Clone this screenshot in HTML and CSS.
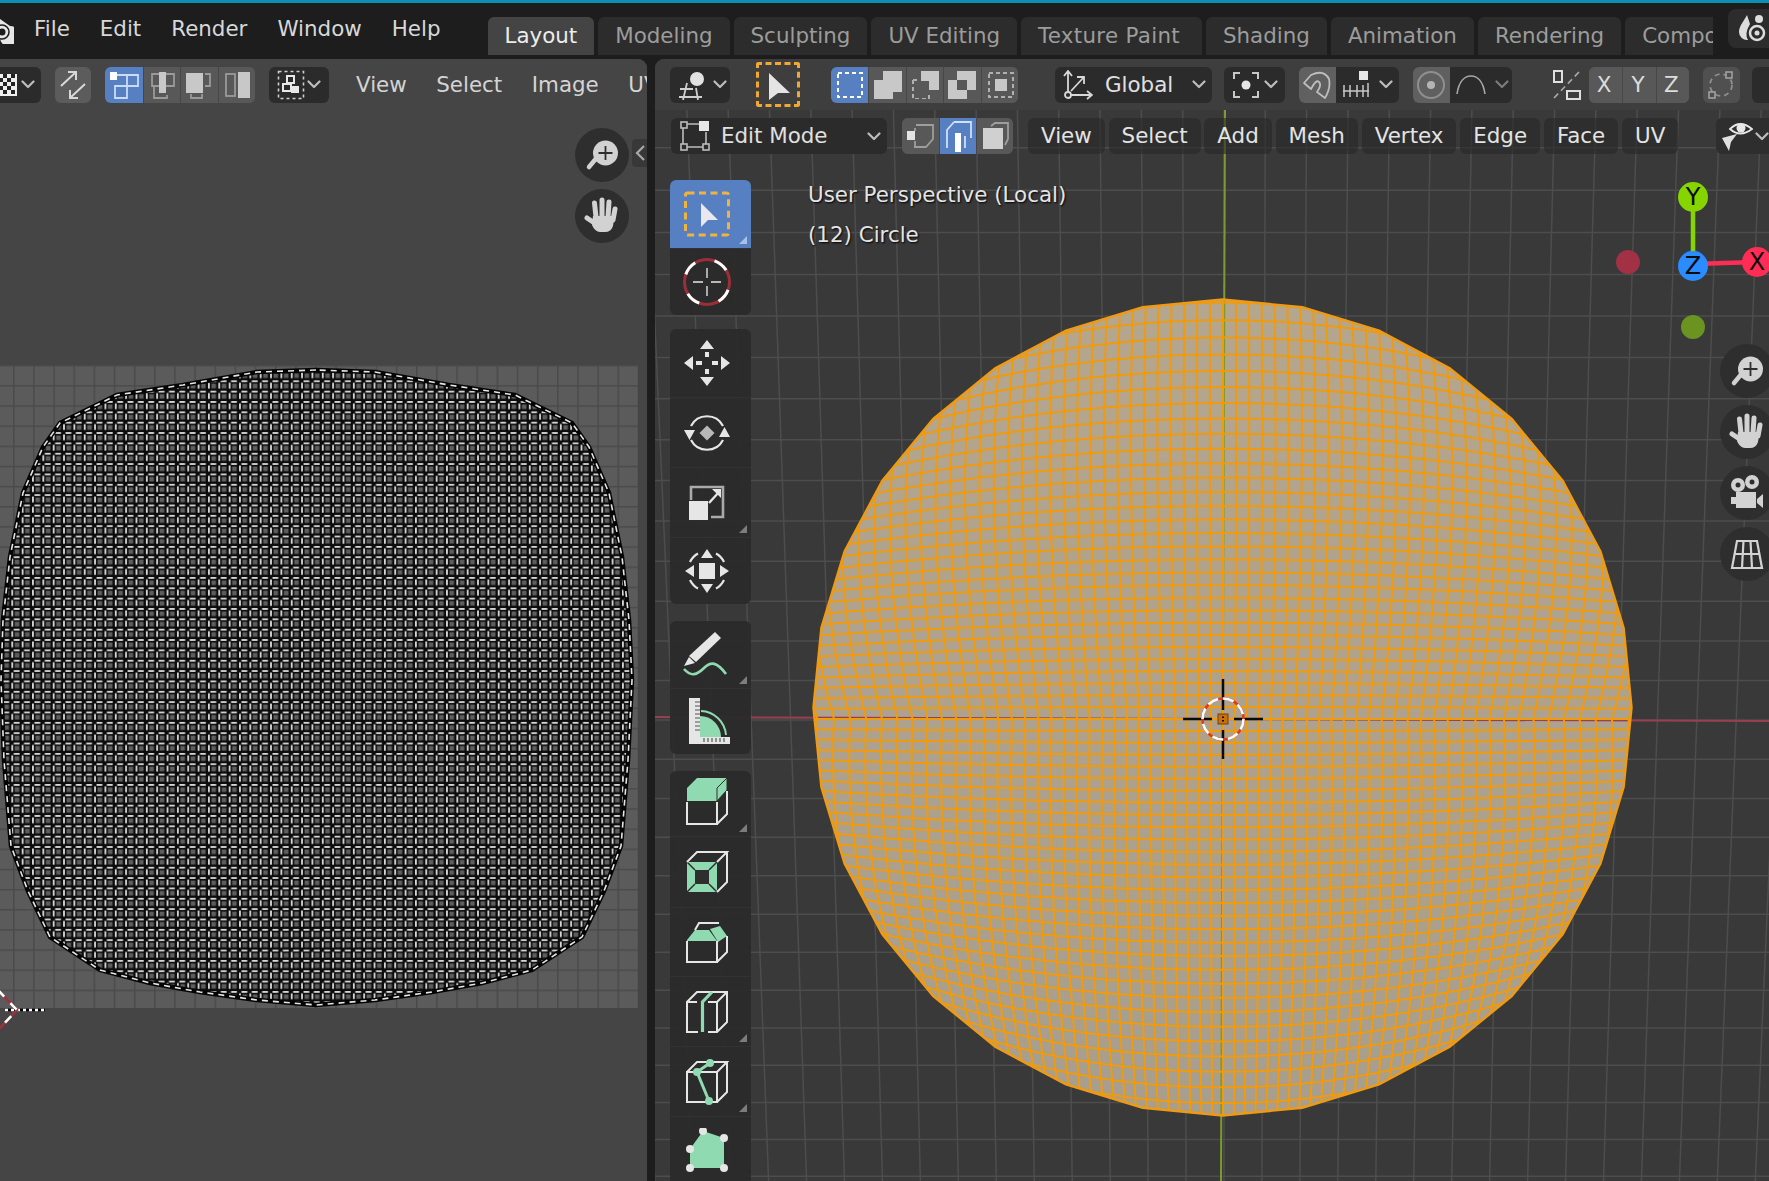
FILE: index.html
```html
<!DOCTYPE html>
<html lang="en">
<head>
<meta charset="utf-8">
<title>Blender – UV Editing</title>
<link rel="stylesheet" href="styles.css">
</head>
<body>
<svg class="sprites" aria-hidden="true">
  <symbol id="chev" viewBox="0 0 14 9"><path d="M1.5 1.5 7 7l5.500-5.500" fill="none" stroke="currentColor" stroke-width="2.200" stroke-linecap="round" stroke-linejoin="round"/></symbol>
  <symbol id="zoom" viewBox="-27 -27 54 54"><path d="M-3-0-13 12" stroke="#d2d2d2" stroke-width="4.500" stroke-linecap="round" fill="none"/><circle cx="3.500" cy="-2" r="12.500" fill="#d2d2d2"/><path d="M3.500-9v14M-3.500-2h14" stroke="#2e2e2e" stroke-width="1.800" fill="none"/></symbol>
  <symbol id="hand" viewBox="-27 -27 54 54"><path d="M-6 1-7.500-13M0 0V-16M6 1 7-14M11 4 13-7M-9 6-15 2" stroke="#d2d2d2" stroke-width="5" stroke-linecap="round" fill="none"/><path d="M-9 0H12.500L11 10Q9 16 3 16H-2Q-7 16-10 9Z" fill="#d2d2d2"/></symbol>
  <symbol id="camera" viewBox="-27 -29 54 54"><circle cx="-9" cy="-10" r="7" fill="#d2d2d2"/><circle cx="5" cy="-13" r="7" fill="#d2d2d2"/><circle cx="-9" cy="-10" r="2.500" fill="#2e2e2e"/><circle cx="5" cy="-13" r="2.500" fill="#2e2e2e"/><path d="M-11-3H9V13H-11ZM-16 2h5v7h-5ZM10 4 16-1V13L10 8Z" fill="#d2d2d2"/></symbol>
  <symbol id="gridicon" viewBox="-27 -27 54 54"><path d="M-10-13H10L15 14H-15ZM-12.500 0H12.500M-3.500-13-5 14M3.500-13 5 14" fill="none" stroke="#d2d2d2" stroke-width="2.200"/></symbol>
</svg>

<header class="topbar">
  <svg class="logo" width="14" height="28" viewBox="0 0 14 28"><path d="M0 3 10 10A10.500 10.500 0 1 1 0 23Z" fill="#e6e6e6"/><circle cx="2" cy="16" r="3.500" fill="#1d1d1d"/><circle cx="2" cy="16" r="7" fill="none" stroke="#1d1d1d" stroke-width="1.500"/></svg>
  <nav class="menu"><span>File</span><span>Edit</span><span>Render</span><span>Window</span><span>Help</span></nav>
  <nav class="tabs">
    <span class="tab tab-active">Layout</span><span class="tab">Modeling</span><span class="tab">Sculpting</span><span class="tab">UV Editing</span><span class="tab tab-wide">Texture Paint</span><span class="tab">Shading</span><span class="tab">Animation</span><span class="tab">Rendering</span><span class="tab">Compositing</span>
  </nav>
  <div class="scene-btn">
    <svg width="40" height="32" viewBox="0 0 40 32"><path d="M11 3C8 9 3 14 3 20a8 8 0 0 0 9 8Q8 22 14 12Z" fill="#dcdcdc"/><circle cx="23" cy="7" r="4" fill="#dcdcdc"/><circle cx="21" cy="21" r="7" fill="none" stroke="#dcdcdc" stroke-width="2.500"/><circle cx="21" cy="21" r="2.500" fill="#dcdcdc"/></svg>
  </div>
</header>

<main class="workspace">
  <section class="uv-editor">
    <svg id="uv" class="canvas" viewBox="0 59 647 1122" width="647" height="1122">
      <defs>
        <pattern id="uvgrid" x="13" y="365" width="20.150" height="20.150" patternUnits="userSpaceOnUse"><path d="M0 0V20.150M0 0H20.150" stroke="#4a4a4a" stroke-width="3" fill="none"/></pattern>
        <pattern id="uvcell" x="1" y="370" width="10.350" height="10.350" patternUnits="userSpaceOnUse">
          <rect width="10.350" height="10.350" fill="#0c0c0c"/>
          <rect x="3.400" y="3.400" width="4.600" height="4.600" fill="#5e5e5e"/>
          <rect x="2.400" y="0" width="5.800" height="1.800" fill="#d8d8d8"/>
          <rect x="0" y="2.400" width="1.800" height="5.800" fill="#d8d8d8"/>
        </pattern>
      </defs>
      <rect x="0" y="365" width="638" height="643" fill="#5b5b5b"/>
      <rect x="0" y="365" width="638" height="643" fill="url(#uvgrid)"/>
      <polygon class="uv-mesh" points="316,370 257,372 183,385 117,395 60,423 43,447 23,493 10,557 3,620 1,680 4,760 11,846 28,891 50,937 100,970 150,983 200,992 257,1000 316,1005 375,1000 432,992 482,983 532,970 582,937 604,891 621,846 628,760 632,680 629,620 622,557 609,493 589,447 572,423 515,395 449,385 375,372"/>
      <polygon class="uv-edge-b" points="316,370 257,372 183,385 117,395 60,423 43,447 23,493 10,557 3,620 1,680 4,760 11,846 28,891 50,937 100,970 150,983 200,992 257,1000 316,1005 375,1000 432,992 482,983 532,970 582,937 604,891 621,846 628,760 632,680 629,620 622,557 609,493 589,447 572,423 515,395 449,385 375,372"/>
      <polygon class="uv-edge-w" points="316,370 257,372 183,385 117,395 60,423 43,447 23,493 10,557 3,620 1,680 4,760 11,846 28,891 50,937 100,970 150,983 200,992 257,1000 316,1005 375,1000 432,992 482,983 532,970 582,937 604,891 621,846 628,760 632,680 629,620 622,557 609,493 589,447 572,423 515,395 449,385 375,372"/>
      <path d="M5 1010H45" stroke="#000" stroke-width="2.500"/><path d="M5 1010H45" stroke="#fff" stroke-width="2.500" stroke-dasharray="3 3"/>
      <path d="M-2 990 17 1010-2 1030" fill="none" stroke="#a2303c" stroke-width="2.500"/><path d="M-2 990 17 1010-2 1030" fill="none" stroke="#fff" stroke-width="2.500" stroke-dasharray="9 9"/>
    </svg>
    <div class="hdr hdr-uv">
      <div class="btn btn-mode">
        <svg width="22" height="22" viewBox="0 0 22 22"><rect width="22" height="22" fill="#eee"/><path d="M0 0h4v4H0zM8 0h4v4H8zM16 0h4v4h-4zM4 4h4v4H4zM12 4h4v4h-4zM0 8h4v4H0zM8 8h4v4H8zM16 8h4v4h-4zM4 12h4v4H4zM12 12h4v4h-4zM0 16h4v4H0zM8 16h4v4H8zM16 16h4v4h-4z" fill="#222"/></svg>
        <svg class="chev"><use href="#chev"/></svg>
      </div>
      <div class="btn btn-sync">
        <svg width="30" height="30" viewBox="0 0 30 30"><path d="M3 16 18 2M10 2h8v8M27 14 12 28M20 28h-8v-8" fill="none" stroke="#d8d8d8" stroke-width="2"/></svg>
      </div>
      <div class="seg seg-uv">
        <span class="cell cell-blue"><svg width="30" height="28" viewBox="0 0 30 28"><path d="M7 4H29V15H18V27H6V15H18M18 4V15" fill="none" stroke="#c9dbf5" stroke-width="1.800"/><rect x="1" y="1" width="7" height="8" fill="#fff"/></svg></span>
        <span class="cell"><svg width="30" height="28" viewBox="0 0 30 28"><path d="M12 3H5V15H12M19 3H27V15H19M7 16V27H20V24" fill="none" stroke="#9a9a9a" stroke-width="1.800"/><rect x="12" y="1" width="7" height="21" fill="#c8c8c8"/></svg></span>
        <span class="cell"><svg width="30" height="28" viewBox="0 0 30 28"><rect x="2" y="2" width="17" height="20" fill="#c8c8c8"/><path d="M21 3H26V15H21M7 23V27H18V23" fill="none" stroke="#9a9a9a" stroke-width="1.800"/></svg></span>
        <span class="cell"><svg width="30" height="28" viewBox="0 0 30 28"><rect x="4" y="3" width="9" height="22" fill="none" stroke="#9a9a9a" stroke-width="1.800"/><rect x="16" y="1" width="12" height="26" fill="#c8c8c8"/></svg></span>
      </div>
      <div class="btn btn-sticky">
        <svg width="28" height="30" viewBox="0 0 28 30"><rect x="1.500" y="1.500" width="25" height="27" fill="none" stroke="#cfcfcf" stroke-width="1.600" stroke-dasharray="3 3"/><rect x="10" y="6" width="7" height="7" fill="none" stroke="#e8e8e8" stroke-width="2"/><rect x="6" y="14" width="8" height="7" fill="none" stroke="#e8e8e8" stroke-width="2"/><rect x="14" y="16" width="8" height="7" fill="#e8e8e8"/></svg>
        <svg class="chev"><use href="#chev"/></svg>
      </div>
      <nav class="uv-menu"><span>View</span><span>Select</span><span>Image</span><span>UV</span></nav>
    </div>
    <div class="nav nav-uv">
      <div class="nav-btn"><svg width="54" height="54"><use href="#zoom"/></svg></div>
      <div class="nav-btn"><svg width="54" height="54"><use href="#hand"/></svg></div>
    </div>
    <div class="side-tab"><svg width="10" height="16" viewBox="0 0 10 16"><path d="M9 1 2 8l7 7" fill="none" stroke="#a8a8a8" stroke-width="2.200"/></svg></div>
  </section>

  <section class="viewport">
    <svg id="view3d" class="canvas" viewBox="655 59 1114 1122" width="1114" height="1122">
      <defs>
        <linearGradient id="meshfill" x1="0" y1="0" x2="0" y2="1"><stop offset="0" stop-color="#b5a68e"/><stop offset="1" stop-color="#a69e8f"/></linearGradient>
      </defs>
      <g id="gridlines"></g>
      <polygon id="disc" fill="url(#meshfill)"/>
      <clipPath id="discclip"><polygon id="discclip-poly"/></clipPath>
      <path class="axis-red" d="M655 717 1769 721"/>
      <path class="axis-green" d="M1225 110 1221 1181"/>
      <g id="meshlines" clip-path="url(#discclip)"></g>
      <polygon id="discedge"/>
      <rect x="1218" y="714" width="10" height="10" fill="#c87010" stroke="#7a3d05" stroke-width="1"/>
      <path d="M1223 716.500v1.500M1223 720v1.500" stroke="#111" stroke-width="2"/>
      <path d="M1183 719H1212M1234 719H1263M1223 679V710M1223 730V759" stroke="#0a0a0a" stroke-width="2.500"/>
      <circle cx="1223" cy="719" r="20.500" fill="none" stroke="#e23a1a" stroke-width="2.500"/>
      <circle cx="1223" cy="719" r="20.500" fill="none" stroke="#fff" stroke-width="2.500" stroke-dasharray="11 5"/>
      <circle cx="1628" cy="262" r="12" fill="#a33145"/>
      <circle cx="1693" cy="327" r="12" fill="#6a9320"/>
      <circle cx="1693" cy="263" r="13" fill="#21558f"/>
      <path d="M1693 197V265" stroke="#86d400" stroke-width="4.500"/>
      <path d="M1693 264 1757 262" stroke="#ff2d55" stroke-width="4.500"/>
      <circle cx="1693" cy="197" r="15" fill="#86d400"/>
      <circle cx="1693" cy="266" r="15" fill="#2b8cff"/>
      <circle cx="1757" cy="262" r="15" fill="#ff2d55"/>
      <text class="giz" x="1693" y="205">Y</text>
      <text class="giz" x="1693" y="274">Z</text>
      <text class="giz" x="1757" y="270">X</text>
    </svg>

    <div class="hdr hdr-tool">
      <div class="btn btn-orient">
        <svg width="30" height="30" viewBox="0 0 30 30"><circle cx="19" cy="9" r="7" fill="#e2e2e2"/><path d="M2 19H15M1 27H24M9 13 5 30M18 18 20 30" fill="none" stroke="#cfcfcf" stroke-width="1.800"/></svg>
        <svg class="chev"><use href="#chev"/></svg>
      </div>
      <div class="active-tool">
        <svg width="30" height="30" viewBox="0 0 30 30"><path d="M6 3 27 23H15L6 30Z" fill="#e4e4e4"/></svg>
      </div>
      <div class="seg seg-sel">
        <span class="cell cell-blue"><svg width="28" height="28" viewBox="0 0 28 28"><rect x="2" y="2" width="24" height="24" fill="none" stroke="#fff" stroke-width="2" stroke-dasharray="4 3"/></svg></span>
        <span class="cell"><svg width="30" height="28" viewBox="0 0 30 28"><path d="M10 0H29V21H20V30H1V9H10Z" fill="#c8c8c8"/></svg></span>
        <span class="cell"><svg width="30" height="28" viewBox="0 0 30 28"><path d="M11 0H29V19H19V10H11Z" fill="#c8c8c8"/><path d="M3 9H9M3 9V28H19V22" fill="none" stroke="#b0b0b0" stroke-width="2" stroke-dasharray="4 3"/></svg></span>
        <span class="cell"><svg width="30" height="28" viewBox="0 0 30 28"><path d="M10 0H29V19H20V28H1V9H10ZM10 9V19H20V9Z" fill="#c8c8c8" fill-rule="evenodd"/></svg></span>
        <span class="cell"><svg width="30" height="28" viewBox="0 0 30 28"><rect x="4" y="2" width="24" height="24" fill="none" stroke="#b0b0b0" stroke-width="2" stroke-dasharray="4 3"/><rect x="10" y="8" width="12" height="12" fill="#c8c8c8"/></svg></span>
      </div>
      <div class="btn btn-global">
        <svg width="30" height="30" viewBox="0 0 30 30"><circle cx="5" cy="25" r="3" fill="none" stroke="#d8d8d8" stroke-width="1.800"/><path d="M5 22V2M1 6 5 1 9 6M8 25H28M24 21l5 4-5 4M8 21 21 7M14 7h7v7" fill="none" stroke="#d8d8d8" stroke-width="1.800"/></svg>
        <span class="btn-label">Global</span>
        <svg class="chev"><use href="#chev"/></svg>
      </div>
      <div class="btn btn-pivot">
        <svg width="28" height="28" viewBox="0 0 28 28"><path d="M8 2H2V8M20 2H26V8M8 26H2V20M20 26H26V20" fill="none" stroke="#c8c8c8" stroke-width="2"/><circle cx="14" cy="14" r="4.500" fill="#e6e6e6"/></svg>
        <svg class="chev"><use href="#chev"/></svg>
      </div>
      <div class="seg seg-snap">
        <span class="cell cell-magnet"><svg width="30" height="30" viewBox="0 0 30 30"><path d="M2 13 9 5Q22-1 27 9 29 18 23 28L15 22Q20 15 17 12 14 9 9 19Z" fill="none" stroke="#bdbdbd" stroke-width="1.800" stroke-linejoin="round"/></svg></span>
        <span class="cell cell-dark"><svg width="30" height="30" viewBox="0 0 30 30"><rect x="18" y="1" width="9" height="9" fill="#e6e6e6"/><path d="M2 21H28M3 15V27M9 15V27M16 15V27M22 15V27M27 13V27" fill="none" stroke="#c8c8c8" stroke-width="1.500"/></svg></span>
        <svg class="chev chev-in"><use href="#chev"/></svg>
      </div>
      <div class="seg seg-prop">
        <span class="cell cell-magnet"><svg width="32" height="32" viewBox="0 0 32 32"><circle cx="16" cy="16" r="13" fill="none" stroke="#8f8f8f" stroke-width="2"/><circle cx="16" cy="16" r="4" fill="#b4b4b4"/></svg></span>
        <span class="cell cell-dark"><svg width="30" height="20" viewBox="0 0 30 20"><path d="M1 19C3 6 9 1 15 1S27 6 29 19" fill="none" stroke="#a8a8a8" stroke-width="1.600"/></svg></span>
        <svg class="chev chev-in chev-dim"><use href="#chev"/></svg>
      </div>
      <div class="mirror">
        <svg width="30" height="32" viewBox="0 0 30 32"><rect x="2" y="2" width="8" height="11" fill="none" stroke="#e0e0e0" stroke-width="2"/><rect x="15" y="22" width="13" height="8" fill="none" stroke="#e0e0e0" stroke-width="2"/><path d="M2 29 28 2" stroke="#aaa" stroke-width="1.600" stroke-dasharray="6 4"/></svg>
      </div>
      <div class="seg seg-xyz"><span class="cell">X</span><span class="cell">Y</span><span class="cell">Z</span></div>
      <div class="btn btn-auto">
        <svg width="30" height="30" viewBox="0 0 30 30"><circle cx="15" cy="15" r="11" fill="none" stroke="#8e8e8e" stroke-width="1.800" stroke-dasharray="5 4"/><rect x="20" y="2" width="6" height="6" fill="#4f4f4f" stroke="#a0a0a0" stroke-width="1.600"/><rect x="3" y="22" width="6" height="6" fill="#4f4f4f" stroke="#a0a0a0" stroke-width="1.600"/></svg>
      </div>
      <div class="btn btn-end"></div>
    </div>

    <div class="hdr2">
      <div class="btn btn-edit">
        <svg width="30" height="30" viewBox="0 0 30 30"><path d="M3 3H20M3 3V24M7 26H24M26 11V24" fill="none" stroke="#bdbdbd" stroke-width="1.600"/><rect x="1" y="1" width="6" height="6" fill="#2b2b2b" stroke="#bdbdbd" stroke-width="1.600"/><rect x="1" y="23" width="6" height="6" fill="#2b2b2b" stroke="#bdbdbd" stroke-width="1.600"/><rect x="23" y="23" width="6" height="6" fill="#2b2b2b" stroke="#bdbdbd" stroke-width="1.600"/><rect x="19" y="0" width="10" height="10" fill="#e8e8e8"/></svg>
        <span class="btn-label">Edit Mode</span>
        <svg class="chev"><use href="#chev"/></svg>
      </div>
      <div class="seg seg-mesh">
        <span class="cell"><svg width="30" height="30" viewBox="0 0 30 30"><path d="M10 4H27V18L20 26H8" fill="none" stroke="#9e9e9e" stroke-width="1.800"/><path d="M9 7V10M9 20V26" fill="none" stroke="#9e9e9e" stroke-width="1.800"/><rect x="1" y="10" width="8" height="9" fill="#e4e4e4"/></svg></span>
        <span class="cell cell-blue"><svg width="30" height="32" viewBox="0 0 30 32"><path d="M11 2H28V18M4 28V10L11 2" fill="none" stroke="#cfe0fa" stroke-width="1.800"/><path d="M22 28V16" stroke="#cfe0fa" stroke-width="1.800"/><rect x="12" y="13" width="6" height="19" fill="#fff"/></svg></span>
        <span class="cell"><svg width="30" height="30" viewBox="0 0 30 30"><path d="M11 5 15 2H28V18L25 24" fill="none" stroke="#9e9e9e" stroke-width="1.800"/><rect x="3" y="7" width="20" height="21" fill="#d0d0d0"/></svg></span>
      </div>
      <nav class="mesh-menu"><span>View</span><span>Select</span><span>Add</span><span>Mesh</span><span>Vertex</span><span>Edge</span><span>Face</span><span>UV</span></nav>
      <div class="btn btn-overlay">
        <svg width="32" height="32" viewBox="0 0 32 32"><path d="M9 9Q19-1 31 9 19 18 9 9Z" fill="none" stroke="#e8e8e8" stroke-width="1.800"/><circle cx="20" cy="8" r="4.500" fill="#e8e8e8"/><path d="M1 18 16 14 10 22 8 31Z" fill="#e0e0e0"/></svg>
        <svg class="chev"><use href="#chev"/></svg>
      </div>
    </div>

    <div class="vp-body">
      <div class="toolbar">
        <div class="tgroup tg1">
          <div class="tool tool-on tool-more"><svg width="48" height="48" viewBox="0 0 48 48"><rect x="2.500" y="3" width="43" height="42" rx="2" fill="none" stroke="#f0b33c" stroke-width="3" stroke-dasharray="7 4.500"/><path d="M18 13 35 30H25L18 37Z" fill="#e8e8ee"/></svg></div>
          <div class="tool"><svg width="48" height="48" viewBox="0 0 48 48"><circle cx="24" cy="24" r="22.500" fill="none" stroke="#9a2f3a" stroke-width="3"/><circle cx="24" cy="24" r="22.500" fill="none" stroke="#fff" stroke-width="3" stroke-dasharray="15 20" stroke-dashoffset="-8"/><path d="M24 10v10M24 28v10M10 24h10M28 24h10" stroke="#b8b8b8" stroke-width="1.800"/></svg></div>
        </div>
        <div class="tgroup tg2">
          <div class="tool"><svg width="48" height="48" viewBox="0 0 48 48"><path d="M24 1 17 10H31ZM24 47 17 38H31ZM1 24 10 17V31ZM47 24 38 17V31ZM22 13h4v5h-4ZM22 30h4v5h-4ZM13 22h6v4h-6ZM29 22h6v4h-6Z" fill="#e6e6e6"/></svg></div>
          <div class="tool"><svg width="48" height="48" viewBox="0 0 48 48"><path d="M8 17A18 18 0 0 1 40 17M40 31A18 18 0 0 1 8 31" fill="none" stroke="#e6e6e6" stroke-width="2.200"/><path d="M24 16.500 31.500 24 24 31.500 16.500 24Z" fill="#b8b8b8"/><path d="M1 21H12L6.500 31ZM36 28H47L41.500 18Z" fill="#e6e6e6"/></svg></div>
          <div class="tool tool-more"><svg width="48" height="48" viewBox="0 0 48 48"><path d="M8 21V8H40V38H28" fill="none" stroke="#aaa" stroke-width="2.600"/><rect x="6" y="22" width="19" height="19" fill="#e6e6e6"/><path d="M26 24 36 13" stroke="#e6e6e6" stroke-width="2.400"/><path d="M29 10H38V19Z" fill="#e6e6e6"/></svg></div>
          <div class="tool"><svg width="48" height="48" viewBox="0 0 48 48"><rect x="16" y="16" width="16" height="16" fill="#e6e6e6"/><path d="M24 2 18 11H30ZM24 46 18 37H30ZM2 24 11 18V30ZM46 24 37 18V30Z" fill="#e6e6e6"/><path d="M7 15Q10 9 15 6.500M33 6.500Q38 9 41 15M41 33Q38 39 33 41.500M15 41.500Q10 39 7 33" fill="none" stroke="#e6e6e6" stroke-width="2.200"/></svg></div>
        </div>
        <div class="tgroup tg3">
          <div class="tool tool-more"><svg width="48" height="48" viewBox="0 0 48 48"><path d="M32 2 38 8 13 32 6 26Z" fill="#e6e6e6"/><path d="M6 27 12 33 1 36Z" fill="#e6e6e6"/><path d="M1 39C8 47 14 45 21 38S34 32 43 44" fill="none" stroke="#8fdab0" stroke-width="2.600"/></svg></div>
          <div class="tool"><svg width="48" height="48" viewBox="0 0 48 48"><path d="M17 19A21 21 0 0 1 38 40H17Z" fill="#8fdab0"/><path d="M18 14A26 26 0 0 1 43 38" fill="none" stroke="#8fdab0" stroke-width="2"/><path d="M6 1H17V40H47V47H6Z" fill="#e6e6e6"/><path d="M12 5h5M12 9h5M12 13h5M12 17h5M12 21h5M12 25h5M12 29h5M12 33h5M21 41v4M25 41v4M29 41v4M33 41v4M37 41v4M41 41v4" stroke="#555" stroke-width="1.200"/></svg></div>
        </div>
        <div class="tgroup tg4">
          <div class="tool tool-more tool-up"><svg width="48" height="48" viewBox="0 0 48 48"><path d="M4 11H34V24H4ZM4 11 14 1H44L34 11Z" fill="#8fdab0"/><path d="M34 11 44 1V13L34 24Z" fill="#8fdab0" stroke="#2e2e2e" stroke-width="1"/><path d="M4 25V47H34V25M34 47 44 37V14" fill="none" stroke="#e6e6e6" stroke-width="2"/></svg></div>
          <div class="tool"><svg width="48" height="48" viewBox="0 0 48 48"><rect x="4" y="14" width="30" height="30" fill="#8fdab0"/><rect x="12" y="22" width="14" height="14" fill="#2e2e2e"/><path d="M4 14 12 22M34 14 26 22M4 44 12 36M34 44 26 36" stroke="#2e2e2e" stroke-width="1.500"/><path d="M4 14 14 4H44L34 14M34 44 44 34V4" fill="none" stroke="#e6e6e6" stroke-width="2"/></svg></div>
          <div class="tool"><svg width="48" height="48" viewBox="0 0 48 48"><path d="M4 22 12 12H26L34 23H4Z" fill="#8fdab0"/><path d="M27 11 37 8 44 18 35 24Z" fill="#8fdab0"/><path d="M4 23V44H34V23M34 44 44 34V18M12 12 16 5H36" fill="none" stroke="#e6e6e6" stroke-width="2"/></svg></div>
          <div class="tool tool-more"><svg width="48" height="48" viewBox="0 0 48 48"><path d="M15 44H4V14L14 4H44V34L34 44H25M34 44V14H25M14 14H4M34 14 44 4" fill="none" stroke="#e6e6e6" stroke-width="2"/><path d="M19.500 44V14L29 4" fill="none" stroke="#8fdab0" stroke-width="3.200"/></svg></div>
          <div class="tool tool-more"><svg width="48" height="48" viewBox="0 0 48 48"><path d="M4 14H34V44H4ZM4 14 14 4H44L34 14M34 44 44 34V4" fill="none" stroke="#e6e6e6" stroke-width="2"/><path d="M27 5 14 14 26 43" fill="none" stroke="#8fdab0" stroke-width="3"/><circle cx="27" cy="5" r="4" fill="#8fdab0"/><circle cx="14" cy="14" r="4" fill="#8fdab0"/><circle cx="26" cy="43" r="4" fill="#8fdab0"/></svg></div>
          <div class="tool"><svg width="48" height="48" viewBox="0 0 48 48"><path d="M20 3 41 10V40H7V21Z" fill="#8fdab0"/><circle cx="20" cy="3" r="4" fill="#e6e6e6"/><circle cx="41" cy="10" r="4" fill="#e6e6e6"/><circle cx="41" cy="40" r="4" fill="#e6e6e6"/><circle cx="7" cy="40" r="4" fill="#e6e6e6"/><circle cx="7" cy="21" r="4" fill="#e6e6e6"/></svg></div>
        </div>
      </div>
      <div class="info"><p>User Perspective (Local)</p><p>(12) Circle</p></div>
    </div>

    <div class="nav nav-3d">
      <div class="nav-btn"><svg width="54" height="54"><use href="#zoom"/></svg></div>
      <div class="nav-btn"><svg width="54" height="54"><use href="#hand"/></svg></div>
      <div class="nav-btn"><svg width="54" height="54"><use href="#camera"/></svg></div>
      <div class="nav-btn"><svg width="54" height="54"><use href="#gridicon"/></svg></div>
    </div>
  </section>
</main>
<script src="script.js"></script>
</body>
</html>
```

FILE: styles.css
```css
* { box-sizing: border-box; }
html, body { margin: 0; height: 100%; overflow: hidden; }
body {
  width: 1769px;
  height: 1181px;
  background: #1d1d1d;
  color: #e0e0e0;
  font: 21.400px/1 "DejaVu Sans", sans-serif;
  display: flex;
  flex-direction: column;
}
.sprites { width: 0; height: 0; position: absolute; }

/* top bar */
.topbar {
  height: 59px;
  flex: none;
  border-top: 3px solid #0d8fb3;
  display: flex;
  align-items: center;
  overflow: hidden;
}
.logo { flex: none; margin-top: -2px; }
.menu { display: flex; gap: 30px; margin-left: 20px; color: #d8d8d8; margin-top: -4px; flex: none; }
.tabs {
  width: 1225px;
  margin-left: 47px;
  height: 38px;
  margin-top: 9px;
  flex: none;
  display: flex;
  gap: 4px;
  overflow: hidden;
}
.tab {
  flex: none;
  height: 38px;
  padding: 0 17px;
  display: flex;
  align-items: center;
  border-radius: 6px 6px 0 0;
  background: #2c2c2c;
  color: #9c9c9c;
}
.tab-wide { padding-right: 22px; letter-spacing: .3px; }
.tab-active { background: #444; color: #ececec; }
.scene-btn {
  flex: none;
  width: 60px;
  height: 39px;
  margin-left: 15px;
  margin-top: -6px;
  padding-left: 8px;
  display: flex;
  align-items: center;
  background: #2c2c2c;
  border-radius: 8px;
}

/* workspace */
.workspace { flex: 1; display: flex; gap: 8px; min-height: 0; }
.uv-editor {
  position: relative;
  width: 647px;
  flex: none;
  background: #454545;
  border-radius: 0 9px 0 0;
  overflow: hidden;
}
.viewport {
  position: relative;
  flex: 1;
  background: #393939;
  border-radius: 9px 0 0 0;
  overflow: hidden;
}
.canvas { position: absolute; left: 0; top: 0; display: block; }

/* UV */
.uv-mesh { fill: url(#uvcell); }
.uv-edge-b { fill: none; stroke: #050505; stroke-width: 4.500; }
.uv-edge-w { fill: none; stroke: #e6e6e6; stroke-width: 1.600; stroke-dasharray: 6 5; }

/* headers */
.hdr {
  position: relative;
  height: 51px;
  display: flex;
  align-items: center;
  overflow: hidden;
}
.hdr-uv { background: #454545; }
.hdr-tool { background: #3e3e3e; padding-left: 15px; }
.btn {
  flex: none;
  height: 36px;
  display: flex;
  align-items: center;
  border-radius: 6px;
  background: #2b2b2b;
}
.chev { width: 14px; height: 9px; color: #bdbdbd; flex: none; }
.btn-label { color: #e0e0e0; }

.btn-mode { width: 53px; margin-left: -12px; padding-left: 7px; gap: 4px; }
.btn-sync { width: 36px; margin-left: 14px; background: #5c5c5c; justify-content: center; }
.seg { flex: none; height: 36px; display: flex; align-items: center; border-radius: 6px; overflow: hidden; background: #585858; }
.cell { flex: none; height: 36px; display: flex; align-items: center; justify-content: center; background: #585858; }
.cell + .cell { border-left: 1px solid #474747; }
.cell-blue { background: #5680c2; }
.cell-magnet { background: #606060; }
.cell-dark { background: #2b2b2b; }
.seg-uv { margin-left: 14px; }
.seg-uv .cell { width: 37.500px; }
.btn-sticky { width: 60px; margin-left: 14px; padding-left: 8px; gap: 2px; }
.uv-menu { display: flex; gap: 29.500px; margin-left: 27px; flex: none; color: #d4d4d4; }

.btn-orient { width: 60px; padding-left: 8px; }
.btn-orient .chev { margin-left: 5px; }
.active-tool {
  flex: none;
  width: 44px;
  height: 45px;
  margin-left: 26px;
  display: flex;
  align-items: center;
  justify-content: center;
  border: 3px dashed #f0a830;
  border-radius: 3px;
}
.seg-sel { margin-left: 31px; }
.seg-sel .cell { width: 37.400px; }
.btn-global { width: 157px; margin-left: 37px; padding-left: 8px; }
.btn-global .btn-label { margin-left: 12px; }
.btn-global .chev { margin-left: 19px; }
.btn-pivot { width: 61px; margin-left: 12px; padding-left: 8px; gap: 4px; }
.seg-snap { width: 100px; margin-left: 14px; background: #2b2b2b; }
.seg-snap .cell-magnet { width: 37px; }
.seg-snap .cell-dark { width: 40px; border: 0; }
.seg-prop { width: 99px; margin-left: 14px; background: #2b2b2b; }
.seg-prop .cell-magnet { width: 37px; }
.seg-prop .cell-dark { width: 42px; border: 0; }
.chev-in { margin-left: 3px; }
.chev-dim { color: #7c7c7c; }
.mirror { flex: none; width: 30px; height: 36px; margin-left: 40px; display: flex; align-items: center; }
.seg-xyz { width: 100px; margin-left: 7px; }
.seg-xyz .cell { width: 33.333px; padding-right: 3px; color: #dcdcdc; }
.btn-auto { width: 37px; margin-left: 14px; background: #505050; justify-content: center; }
.btn-end { width: 40px; margin-left: 12px; }

.hdr2 {
  position: relative;
  height: 36px;
  margin-top: 8px;
  padding-left: 16px;
  display: flex;
  align-items: center;
}
.btn-edit { width: 216px; padding-left: 9px; }
.btn-edit .btn-label { margin-left: 11px; }
.btn-edit .chev { margin-left: auto; margin-right: 6px; }
.seg-mesh { margin-left: 15px; width: 111px; }
.seg-mesh .cell { width: 37px; }
.mesh-menu { display: flex; gap: 3.800px; margin-left: 15px; }
.mesh-menu span {
  height: 36px;
  padding: 0 13px;
  display: flex;
  align-items: center;
  border-radius: 6px;
  background: rgba(40, 40, 40, .6);
  color: #e4e4e4;
}
.btn-overlay { margin-left: auto; margin-right: -20px; width: 73px; padding-left: 5px; gap: 2px; background: #2e2e2e; }

/* viewport body */
.vp-body { position: relative; display: flex; align-items: flex-start; margin-top: 26px; padding-left: 15px; }
.toolbar { width: 81px; flex: none; display: flex; flex-direction: column; }
.tgroup { border-radius: 6px; overflow: hidden; background: rgba(42, 42, 42, .94); display: grid; }
.tg1 { grid-auto-rows: 67.500px; }
.tg2 { grid-template-rows: 68px 70px 70px 67px; margin-top: 14px; }
.tg3 { grid-auto-rows: 66.500px; margin-top: 17px; }
.tg4 { grid-template-rows: 65px 71px 69px 70px 70px 70px; margin-top: 17px; }
.tool { position: relative; display: flex; align-items: center; justify-content: center; padding-right: 7px; }
.tool + .tool { border-top: 1px solid #323232; }
.tool-up { padding-bottom: 5px; }
.tool-on { background: #5680c2; }
.tool-more::after {
  content: "";
  position: absolute;
  right: 4px;
  bottom: 4px;
  border-style: solid;
  border-width: 0 0 8px 8px;
  border-color: transparent transparent #7d7d7d transparent;
}
.tool-on.tool-more::after { border-bottom-color: #a9c1e8; }
.info { margin-left: 57px; margin-top: -5px; color: #e4e4e4; text-shadow: 1px 1px 2px #000; }
.info p { margin: 0; height: 40px; line-height: 40px; white-space: nowrap; }

/* nav buttons */
.nav { position: absolute; display: flex; flex-direction: column; gap: 7px; }
.nav-uv { left: 575px; top: 69px; }
.nav-3d { right: -5px; top: 285px; }
.nav-btn { width: 54px; height: 54px; border-radius: 50%; background: #2e2e2e; }
.nav-btn svg { display: block; }
.side-tab {
  position: absolute;
  right: 0;
  top: 80px;
  width: 15px;
  height: 28px;
  display: flex;
  align-items: center;
  justify-content: center;
  background: #383838;
  border-radius: 4px 0 0 4px;
}

/* 3D canvas */
#gridlines path { stroke: #4d4d4d; stroke-width: 1.500; fill: none; }
.axis-red { stroke: #98404f; stroke-width: 2; fill: none; }
.axis-green { stroke: #7c9b2c; stroke-width: 2; fill: none; }
#meshlines path { stroke: #f09a0e; stroke-width: 2; fill: none; }
#discedge { fill: none; stroke: #ee9a14; stroke-width: 2.500; }
.giz { font: 24px "DejaVu Sans", sans-serif; fill: #0b0b0b; text-anchor: middle; }
```

FILE: script.js
```js
// Generates the 3D viewport's floor grid and the warped mesh wireframe.
const NS = 'http://www.w3.org/2000/svg';
const grid = document.getElementById('gridlines');
const lines = document.getElementById('meshlines');

function addPath(parent, pts) {
  const p = document.createElementNS(NS, 'path');
  p.setAttribute('d', 'M' + pts.map(q => q[0].toFixed(1) + ' ' + q[1].toFixed(1)).join('L'));
  parent.appendChild(p);
}

// floor grid: slight perspective convergence towards the bottom of the view
for (let i = -16; i <= 16; i++) {
  const at = y => [1224 + i * 39.4 * (1 - 8e-5 * (y - 720)), y];
  addPath(grid, [at(110), at(1181)]);
}
const step = y => 39.3 - 0.006 * (y - 720);
for (let y = 720; y < 1181; y += step(y)) addPath(grid, [[655, y], [1769, y]]);
for (let y = 720 - step(700); y > 110; y -= step(y)) addPath(grid, [[655, y], [1769, y]]);

// outer 32-gon
const poly = [];
for (let k = 0; k < 32; k++) {
  const t = k * Math.PI / 16;
  poly.push((1222.5 + 409 * Math.cos(t)).toFixed(1) + ',' + (707.5 + 408 * Math.sin(t)).toFixed(1));
}
['disc', 'discclip-poly', 'discedge'].forEach(id => document.getElementById(id).setAttribute('points', poly.join(' ')));

// wireframe: a square grid, bowed towards the middle, slightly wider near the top
const R = 408;
function warp(i, j) {
  const X = 11.9 * i + 0.0018 * i * i * i;
  const b = j < 0 ? 0.0022 : 0.0016;
  const Y = 11.9 * j + b * j * j * j;
  const U = Math.min(Math.abs(X / R), 1.1), V = Math.min(Math.abs(Y / R), 1.1);
  const cx = 0.14 + 0.11 * U * U, cy = 0.14 + 0.11 * V * V;
  const persp = Y < 0 ? 1 + 0.26 * V : 1 + 0.05 * V;
  return [1223 + X * (1 - cx * V * V) * persp, 719 + Y * (1 - cy * U * U)];
}
function trace(fn) {
  const run = [];
  for (let t = -46; t <= 46; t += 1) run.push(fn(t));
  addPath(lines, run);
}
for (let n = -46; n <= 46; n++) {
  trace(t => warp(n, t));
  trace(t => warp(t, n));
}
```
